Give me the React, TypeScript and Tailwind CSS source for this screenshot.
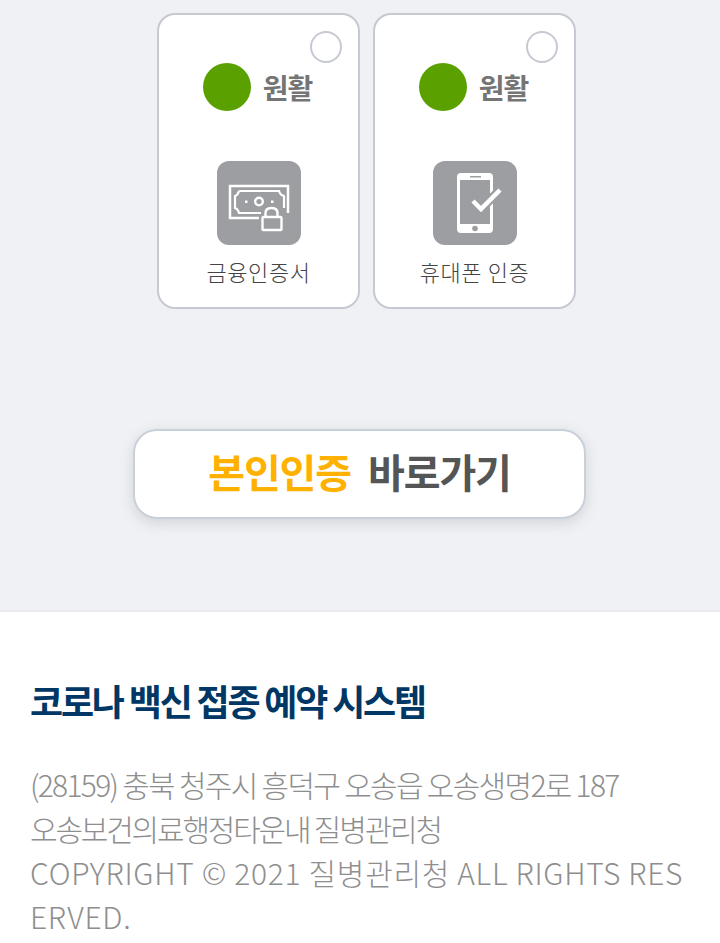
const font = "font-['Noto_Sans_CJK_KR','Noto_Sans',sans-serif]"

const MoneyIcon = () => (
  <svg width="84" height="84" viewBox="0 0 84 84" fill="none" stroke="#fff">
    <path d="M71 52V25H13V57H45" strokeWidth="2.500" />
    <path d="M22 30H62Q63 34 67 35V47" strokeWidth="2.200" />
    <path d="M45 52H22Q21 48 18 47V35Q21 34 22 30" strokeWidth="2.200" />
    <circle cx="42" cy="40.500" r="3.800" strokeWidth="2.400" />
    <rect x="28" y="39.500" width="2.500" height="2.500" fill="#fff" stroke="none" />
    <rect x="54" y="39.500" width="2.500" height="2.500" fill="#fff" stroke="none" />
    <rect x="42" y="53" width="26" height="18" fill="#9d9ea2" stroke="none" />
    <path d="M44 47H66V56H44Z" fill="#9d9ea2" stroke="none" />
    <rect x="45.500" y="56" width="19" height="13" rx="1" strokeWidth="2.400" />
    <path d="M48.500 56V52Q48.500 47 54.500 47Q60.500 47 60.500 52V56" strokeWidth="2.400" />
  </svg>
)

const PhoneIcon = () => (
  <svg width="84" height="84" viewBox="0 0 84 84" fill="none">
    <rect x="24" y="12" width="36" height="60" rx="4" fill="#fff" />
    <rect x="27" y="19" width="30" height="44" fill="#9d9ea2" />
    <rect x="37" y="15" width="11" height="1.500" fill="#9d9ea2" />
    <circle cx="42" cy="67.500" r="2.800" fill="#9d9ea2" />
    <path d="M40 40L48 48L67 29" stroke="#9d9ea2" strokeWidth="9" />
    <path d="M40 40L48 48L67 29" stroke="#fff" strokeWidth="4.500" />
  </svg>
)

const StatusCard = ({ label, icon }: { label: string; icon: React.ReactNode }) => (
  <div className="relative w-[203px] h-[296px] shrink-0 flex flex-col items-center bg-white border-2 border-[#c6c9d2] rounded-[18px]">
    <span className="absolute top-[16px] right-[16px] w-[32px] h-[32px] bg-white rounded-full border-2 border-[#c6c9d2]" />
    <div className="flex items-center gap-3 mt-[48px] h-[48px] -ml-[2px]">
      <span className="w-[48px] h-[48px] rounded-full bg-[#5aa100]" />
      <span className="text-[28px] leading-[48px] font-bold text-[#757575] tracking-[-1px]">원활</span>
    </div>
    <div className="mt-[50px] w-[84px] h-[84px] rounded-[12px] bg-[#9d9ea2]">{icon}</div>
    <p className="mt-[11px] text-[22px] leading-[30px] font-light text-[#444444] tracking-[0.6px] whitespace-nowrap">{label}</p>
  </div>
)

export default function App() {
  return (
    <div className={`${font} w-[720px] h-[943px] overflow-hidden bg-white flex flex-col`}>
      <section className="h-[610px] shrink-0 bg-[#f0f1f4] pt-[13px]">
        <div className="flex gap-[13px] ml-[157px]">
          <StatusCard label="금융인증서" icon={<MoneyIcon />} />
          <StatusCard label="휴대폰 인증" icon={<PhoneIcon />} />
        </div>
        <button className="block ml-[133px] mt-[120px] w-[453px] h-[90px] pb-[6px] bg-white border-2 border-[#c8d0da] rounded-[24px] shadow-[0_4px_14px_rgba(70,80,100,0.18)] text-[40px] leading-[74px] font-bold tracking-[-1.100px]">
          <span className="text-[#ffb100]">본인인증</span>
          <span className="text-[#555555] ml-[17px]">바로가기</span>
        </button>
      </section>
      <footer className="flex-1 border-t-2 border-[#eaebf2] px-[30px] pt-[63px]">
        <h2 className="text-[36px] leading-[50px] font-bold text-[#003764] tracking-[-2.200px]">코로나 백신 접종 예약 시스템</h2>
        <div className="mt-[37px] text-[30px] leading-[44px] font-light text-[#8e8e8e] w-[660px]">
          <p className="tracking-[-1.700px]">(28159) 충북 청주시 흥덕구 오송읍 오송생명2로 187</p>
          <p className="tracking-[-2.200px]">오송보건의료행정타운내 질병관리청</p>
          <p className="break-all tracking-[0.68px]">COPYRIGHT © 2021 질병관리청 ALL RIGHTS RESERVED.</p>
        </div>
      </footer>
    </div>
  )
}
